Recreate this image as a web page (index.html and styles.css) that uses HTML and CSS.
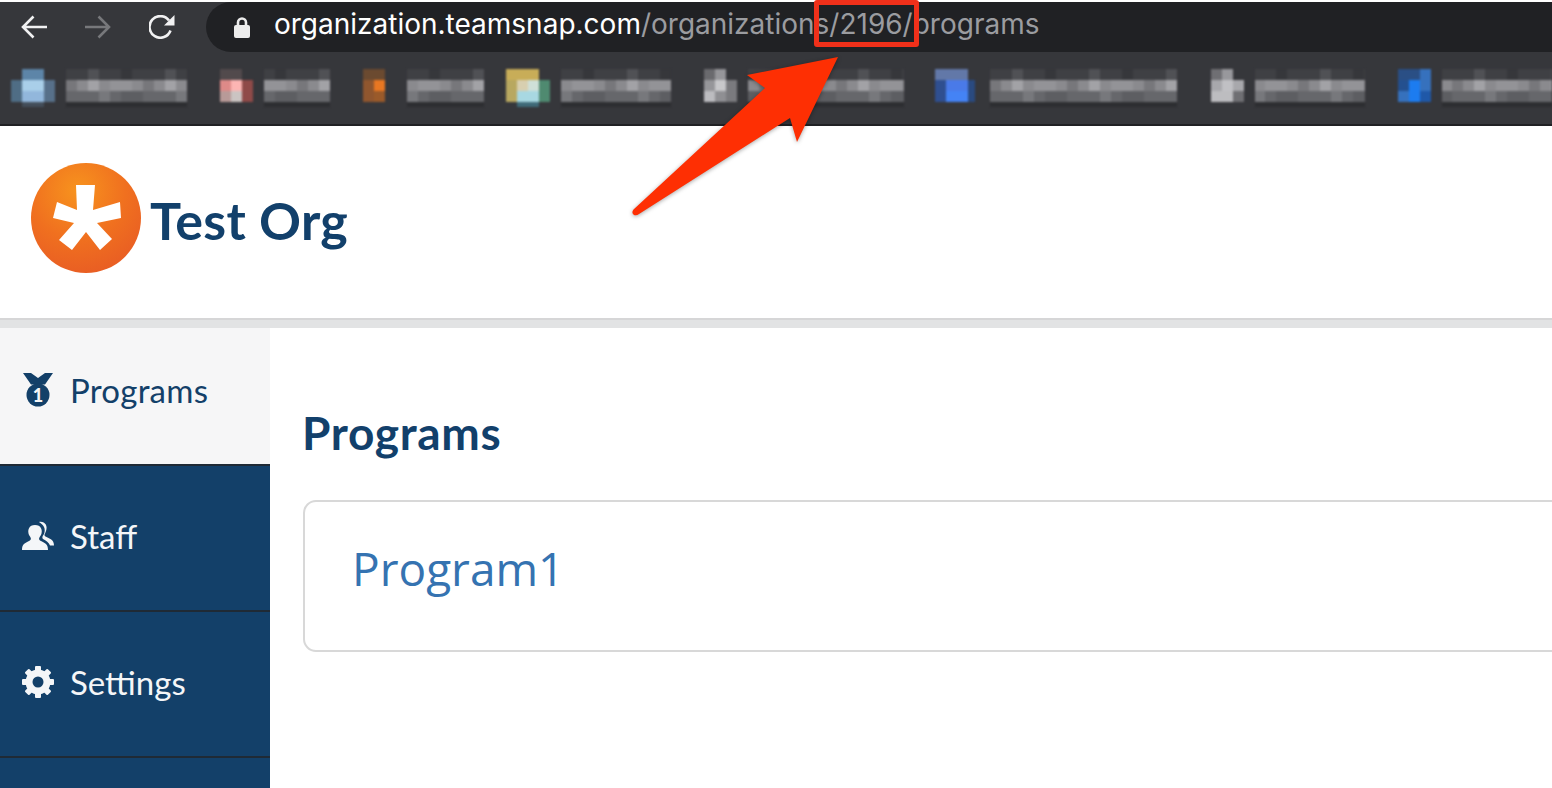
FILE: index.html
```html
<!DOCTYPE html>
<html lang="en">
<head>
<meta charset="utf-8">
<title>Test Org - Programs</title>
<link rel="stylesheet" href="styles.css">
</head>
<body>
<div class="page">
  <div class="toolbar">
    <svg class="nav-icon" viewBox="0 0 26 24"><path class="stroke-light" d="M26 12H2M12.5 1.5 2 12l10.500 10.500"/></svg>
    <svg class="nav-icon" viewBox="0 0 26 24"><path class="stroke-dim" d="M0 12h24M13.500 1.500 24 12 13.500 22.500"/></svg>
    <svg class="nav-icon" viewBox="0 0 26 24"><path class="stroke-light" d="M21.500 15.500A10.800 10.800 0 1 1 20 5.500"/><path class="fill-light" d="M15 10.500 25.500 10.500 25.500 0z"/></svg>
    <div class="omnibox">
      <svg class="lock" viewBox="0 0 16 21"><path class="lock-shackle" d="M4 9V5.500a4 4 0 0 1 8 0V9"/><rect class="fill-lock" x="0" y="8" width="16" height="13" rx="2"/></svg>
      <div class="url"><span class="url-host">organization.teamsnap.com</span>/organizations/2196/programs</div>
    </div>
  </div>
  <div class="bookmarks">
    <svg class="mosaic" viewBox="0 52 1552 72" width="1552" height="72" shape-rendering="crispEdges">
      <defs>
        <pattern id="txt" patternUnits="userSpaceOnUse" x="0" y="69" width="77" height="38">
          <rect class="a1" x="0" y="0" width="77" height="11"/>
          <rect class="a2" x="11" y="0" width="11" height="11"/>
          <rect class="a3" x="44" y="0" width="11" height="11"/>
          <rect class="b1" x="0" y="11" width="77" height="11"/>
          <rect class="b2" x="11" y="11" width="11" height="11"/>
          <rect class="b3" x="33" y="11" width="22" height="11"/>
          <rect class="b4" x="66" y="11" width="11" height="11"/>
          <rect class="c1" x="0" y="22" width="77" height="11"/>
          <rect class="c2" x="22" y="22" width="11" height="11"/>
          <rect class="c3" x="44" y="22" width="22" height="11"/>
          <rect class="d1" x="0" y="33" width="77" height="5"/>
        </pattern>
      </defs>
      <g fill="url(#txt)">
        <rect x="66" y="69" width="121" height="38"/>
        <rect x="264" y="69" width="66" height="38"/>
        <rect x="407" y="69" width="77" height="38"/>
        <rect x="561" y="69" width="110" height="38"/>
        <rect x="748" y="69" width="156" height="38"/>
        <rect x="990" y="69" width="187" height="38"/>
        <rect x="1255" y="69" width="110" height="38"/>
        <rect x="1442" y="69" width="110" height="38"/>
      </g>
      <rect fill="#5d85a8" x="22" y="69" width="22" height="11"/>
      <rect fill="#4f6d85" x="11" y="80" width="11" height="22"/>
      <rect fill="#a9cfe9" x="22" y="80" width="22" height="11"/>
      <rect fill="#92b7dc" x="22" y="91" width="22" height="11"/>
      <rect fill="#57708a" x="44" y="80" width="11" height="22"/>
      <rect fill="#444e5a" x="22" y="102" width="22" height="5"/>

      <rect fill="#524a4c" x="220" y="69" width="22" height="11"/>
      <rect fill="#de8a88" x="220" y="80" width="11" height="11"/>
      <rect fill="#fdb5b3" x="231" y="80" width="11" height="11"/>
      <rect fill="#8f4a48" x="242" y="80" width="11" height="22"/>
      <rect fill="#b89a98" x="220" y="91" width="11" height="11"/>
      <rect fill="#cbc4c2" x="231" y="91" width="11" height="11"/>

      <rect fill="#6b4a30" x="363" y="69" width="22" height="11"/>
      <rect fill="#90562e" x="363" y="80" width="11" height="22"/>
      <rect fill="#e87722" x="374" y="80" width="11" height="11"/>
      <rect fill="#9a5a2a" x="374" y="91" width="11" height="11"/>

      <rect fill="#c8ad58" x="506" y="69" width="33" height="11"/>
      <rect fill="#b8a860" x="506" y="80" width="11" height="22"/>
      <rect fill="#d8cfb0" x="517" y="80" width="11" height="11"/>
      <rect fill="#cfe0d8" x="528" y="80" width="11" height="11"/>
      <rect fill="#a8d8e2" x="517" y="91" width="22" height="11"/>
      <rect fill="#4f8a70" x="539" y="80" width="11" height="22"/>
      <rect fill="#3f6a78" x="517" y="102" width="22" height="5"/>

      <rect fill="#6a6a6e" x="704" y="69" width="11" height="11"/>
      <rect fill="#96969a" x="715" y="69" width="11" height="11"/>
      <rect fill="#96969a" x="704" y="80" width="11" height="11"/>
      <rect fill="#c8c8cb" x="715" y="80" width="11" height="11"/>
      <rect fill="#7a7a7e" x="726" y="80" width="11" height="22"/>
      <rect fill="#bcbcc0" x="704" y="91" width="11" height="11"/>
      <rect fill="#8f8f93" x="715" y="91" width="11" height="11"/>

      <rect fill="#6278a8" x="935" y="69" width="33" height="11"/>
      <rect fill="#2f4f90" x="935" y="80" width="11" height="22"/>
      <rect fill="#4a7ae8" x="946" y="80" width="22" height="11"/>
      <rect fill="#4483f5" x="946" y="91" width="22" height="11"/>
      <rect fill="#2a4a80" x="968" y="80" width="7" height="22"/>

      <rect fill="#6f6f73" x="1211" y="69" width="11" height="11"/>
      <rect fill="#98989c" x="1222" y="69" width="11" height="11"/>
      <rect fill="#a8a8ac" x="1211" y="80" width="11" height="11"/>
      <rect fill="#c0c0c4" x="1222" y="80" width="11" height="11"/>
      <rect fill="#a8a8ac" x="1233" y="80" width="11" height="11"/>
      <rect fill="#bdbdc0" x="1211" y="91" width="22" height="11"/>
      <rect fill="#6f6f73" x="1233" y="91" width="11" height="11"/>

      <rect fill="#2a4f85" x="1398" y="69" width="22" height="11"/>
      <rect fill="#3671bd" x="1420" y="69" width="11" height="22"/>
      <rect fill="#24508f" x="1398" y="80" width="11" height="11"/>
      <rect fill="#1c7cf0" x="1409" y="80" width="11" height="22"/>
      <rect fill="#3671bd" x="1398" y="91" width="11" height="11"/>
      <rect fill="#1f58a8" x="1420" y="91" width="11" height="11"/>
    </svg>
  </div>
  <header class="org-header">
    <svg class="org-logo" viewBox="0 0 110 110">
      <defs>
        <radialGradient id="orb" cx="0.42" cy="0.25" r="0.8">
          <stop offset="0" stop-color="#f7931e"/>
          <stop offset="0.55" stop-color="#f0701f"/>
          <stop offset="1" stop-color="#e85c24"/>
        </radialGradient>
      </defs>
      <circle cx="55" cy="55" r="55" fill="url(#orb)"/>
      <path fill="#fff" d="M45 22 64 22 62 47 89 39 90 55 66 60 81 76 69 87 55 69 41 87 28 77 43 60 22 55 26 39 46 47z"/>
    </svg>
    <h1 class="org-name">Test Org</h1>
  </header>
  <div class="divider"></div>
  <div class="layout">
    <nav class="sidebar">
      <a class="nav-item nav-active">
        <svg class="nav-glyph" viewBox="0 0 32 34">
          <path class="medal" d="M1 0h8l7 5 7-5h8l-8 11.500h-14z"/>
          <circle class="medal" cx="16" cy="22" r="11.500"/>
          <text class="medal-num" x="16" y="28.500">1</text>
        </svg>
        <span>Programs</span>
      </a>
      <a class="nav-item">
        <svg class="nav-glyph" viewBox="0 0 32 28">
          <path class="glyph" d="M0 28c0-6 3-7 7-9 3-1.500 2-3 0-6-2-5 0-10 6-10s8 5 6 10c-2 3-3 4.500 0 6 4 2 7 3 7 9z"/>
          <path class="glyph" d="M17 0c6-1 9 4 7 9-1 3-2.500 4-.5 5.500 4 2 8.500 3 8.500 9h-4c-1-3-4-5-7-6.500-1-1-1-2.500 1-5 2-5 0-9-5-12z"/>
        </svg>
        <span>Staff</span>
      </a>
      <a class="nav-item">
        <svg class="nav-glyph" viewBox="0 0 32 32">
          <circle class="gear-ring" cx="16" cy="16" r="12.500"/>
          <g class="glyph">
            <rect x="13" y="0" width="6" height="32" rx="1"/>
            <rect x="13" y="0" width="6" height="32" rx="1" transform="rotate(45 16 16)"/>
            <rect x="13" y="0" width="6" height="32" rx="1" transform="rotate(90 16 16)"/>
            <rect x="13" y="0" width="6" height="32" rx="1" transform="rotate(135 16 16)"/>
          </g>
          <circle class="gear-hole" cx="16" cy="16" r="5.500"/>
        </svg>
        <span>Settings</span>
      </a>
      <a class="nav-item"></a>
    </nav>
    <main class="content">
      <h2 class="page-title">Programs</h2>
      <div class="card"><a class="card-link">Program1</a></div>
    </main>
  </div>
  <div class="callout-box"></div>
  <svg class="callout-arrow" viewBox="0 0 1552 788" width="1552" height="788">
    <path class="arrow-shape" d="M838 57 747 75 765 88 633.500 209.500Q631 213 634 215 636.500 216 639 214L790 118 797 142z"/>
  </svg>
</div>
</body>
</html>
```
FILE: styles.css
```css
* { box-sizing: border-box; }
html, body { margin: 0; padding: 0; background: #fff; }
.page {
  position: relative;
  width: 1552px;
  height: 788px;
  overflow: hidden;
  padding-top: 2px;
  font-family: "Lato", "Liberation Sans", sans-serif;
}

/* browser chrome */
.toolbar {
  display: flex;
  align-items: center;
  height: 50px;
  padding-left: 21px;
  gap: 38px;
  background: #36373b;
}
.nav-icon { width: 26px; height: 24px; flex: none; }
.stroke-light, .stroke-dim, .lock-shackle { fill: none; stroke-width: 2.6; }
.stroke-light { stroke: #f1f1f2; }
.stroke-dim { stroke: #77787b; }
.fill-light { fill: #f1f1f2; }
.lock-shackle { stroke: #ececec; }
.fill-lock { fill: #ececec; }
.omnibox {
  flex: 1;
  display: flex;
  align-items: center;
  height: 50px;
  margin-left: -7px;
  padding-left: 28px;
  gap: 24px;
  background: #202124;
  border-radius: 25px 0 0 25px;
}
.lock { width: 16px; height: 21px; flex: none; }
.url {
  font-family: "Inter", "Roboto", sans-serif;
  font-size: 28px;
  color: #9b9ca0;
  white-space: nowrap;
  margin-top: -6px;
}
.url-host { color: #fff; }
.bookmarks {
  height: 74px;
  background: #36373b;
  border-bottom: 2px solid #202124;
}
.mosaic { display: block; filter: blur(0.8px); }
.a1 { fill: #3f4044; } .a2 { fill: #505155; } .a3 { fill: #36373b; }
.b1 { fill: #8a8a8e; } .b2 { fill: #a2a2a6; } .b3 { fill: #939397; } .b4 { fill: #77777b; }
.c1 { fill: #66676b; } .c2 { fill: #77787c; } .c3 { fill: #5d5e62; }
.d1 { fill: #2d2e31; }

/* org header */
.org-header {
  display: flex;
  align-items: center;
  height: 192px;
  padding-left: 31px;
  gap: 9px;
  background: #fff;
}
.org-logo { width: 110px; height: 110px; flex: none; margin-top: -9px; }
.org-name {
  margin: -5px 0 0;
  font-size: 52px;
  font-weight: 700;
  letter-spacing: 0.3px;
  color: #12406b;
}
.divider {
  height: 10px;
  background: #e2e3e4;
  border-top: 2px solid #d6d6d7;
}

/* layout */
.layout { display: flex; height: 460px; }
.sidebar { width: 270px; flex: none; background: #134069; }
.nav-item {
  display: flex;
  align-items: center;
  gap: 16px;
  height: 146px;
  padding: 0 0 4px 22px;
  font-size: 33px;
  color: #f4f6f8;
  border-bottom: 2px solid #1f2a35;
}
.nav-active {
  height: 138px;
  padding-bottom: 13px;
  background: #f6f6f7;
  color: #134069;
  letter-spacing: 0.25px;
}
.nav-glyph { width: 32px; height: 34px; flex: none; }
.medal { fill: #134069; }
.medal-num {
  font-family: "Lato", sans-serif;
  font-size: 18px;
  font-weight: 900;
  fill: #f6f6f7;
  text-anchor: middle;
}
.glyph { fill: #f4f6f8; }
.gear-ring { fill: #f4f6f8; }
.gear-hole { fill: #134069; }

.content { flex: 1; min-width: 0; padding: 76px 0 0 33px; overflow: hidden; }
.page-title {
  margin: 0 0 38px -1px;
  font-size: 46px;
  line-height: 58px;
  font-weight: 700;
  letter-spacing: 0.65px;
  color: #12406b;
}
.card {
  display: flex;
  align-items: center;
  width: calc(100% + 40px);
  height: 152px;
  padding: 0 0 17px 47px;
  border: 2px solid #d8d8d8;
  border-radius: 13px;
  background: #fff;
}
.card-link {
  font-family: "Open Sans", "Liberation Sans", sans-serif;
  font-size: 46px;
  color: #3573b1;
}

/* annotation overlays */
.callout-box {
  position: absolute;
  left: 814px;
  top: 0;
  width: 105px;
  height: 47px;
  border: 5.5px solid #f0301a;
  border-radius: 3px;
}
.callout-arrow {
  position: absolute;
  left: 0;
  top: 0;
  filter: drop-shadow(0 1px 2px rgba(0, 0, 0, 0.35));
}
.arrow-shape { fill: #fe2f03; }
```
